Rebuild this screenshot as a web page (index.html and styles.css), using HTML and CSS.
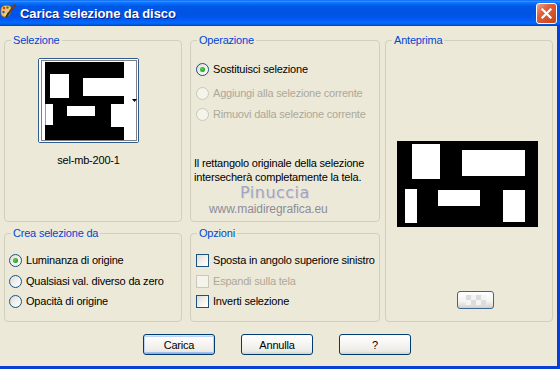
FILE: index.html
```html
<!DOCTYPE html>
<html lang="it">
<head>
    <meta charset="UTF-8">
    <title>Carica selezione da disco</title>
    <link rel="stylesheet" href="styles.css">
</head>
<body>

    <div class="window">
        <div class="titlebar">
            <svg class="app-icon" width="16" height="16" viewBox="0 0 16 16">
                <path d="M1 5 C1 1, 9 0, 11 3 C12 5, 9 6, 10 8 C11 10, 8 14, 4 13 C0 12, 1 8, 1 5 Z" fill="#F2C46A" stroke="#9A5A1A" stroke-width="0.8"/>
                <circle cx="4" cy="4" r="1.3" fill="#E0321C"/>
                <circle cx="7.5" cy="3.5" r="1.2" fill="#2E8A2E"/>
                <circle cx="3.5" cy="8" r="1.2" fill="#2058D0"/>
                <circle cx="6" cy="11" r="1.1" fill="#F0F060"/>
                <path d="M15 1 L8 10" stroke="#7A3A10" stroke-width="2" stroke-linecap="round"/>
                <path d="M8.5 9.5 L6.5 12.5" stroke="#333" stroke-width="2.2" stroke-linecap="round"/>
            </svg>
            <span class="title">Carica selezione da disco</span>
            <button class="close">
                <svg width="13" height="13" viewBox="0 0 13 13">
                    <path d="M2.5 2.5 L10.5 10.5 M10.5 2.5 L2.5 10.5" stroke="#fff" stroke-width="2.2" stroke-linecap="square"/>
                </svg>
            </button>
        </div>

        <div class="client">
            <div class="groups">

                <div class="group sel">
                    <div class="group-title">Selezione</div>
                    <div class="sel-body">
                        <div class="combo">
                            <svg width="99" height="83" viewBox="0 0 99 83">
                                <rect x="0" y="0" width="99" height="83" fill="#fff"/>
                                <rect x="6" y="3" width="79" height="78" fill="#000"/>
                                <rect x="11" y="15" width="19" height="24" fill="#fff"/>
                                <rect x="44" y="19" width="41" height="18" fill="#fff"/>
                                <rect x="6" y="45" width="8" height="21" fill="#9a9a9a"/>
                                <rect x="7" y="45" width="7" height="21" fill="#fff"/>
                                <rect x="28" y="47" width="28" height="10" fill="#fff"/>
                                <rect x="72" y="45" width="13" height="23" fill="#fff"/>
                                <path d="M93 40 L98 40 L95.5 43 Z" fill="#000"/>
                                <rect x="2.5" y="1.5" width="95" height="80" fill="none" stroke="#000" stroke-dasharray="1 1"/>
                            </svg>
                        </div>
                        <div class="sel-name">sel-mb-200-1</div>
                    </div>
                </div>

                <div class="group op">
                    <div class="group-title">Operazione</div>
                    <label class="option first"><span class="radio checked"></span>Sostituisci selezione</label>
                    <label class="option disabled second"><span class="radio"></span>Aggiungi alla selezione corrente</label>
                    <label class="option disabled third"><span class="radio"></span>Rimuovi dalla selezione corrente</label>
                    <p class="note">Il rettangolo originale della selezione<br>intersecherà completamente la tela.</p>
                    <div class="mark-name">Pinuccia</div>
                    <div class="mark-site">www.maidiregrafica.eu</div>
                </div>

                <div class="group preview">
                    <div class="group-title">Anteprima</div>
                    <svg class="preview-img" width="141" height="86" viewBox="0 0 141 86">
                        <rect width="141" height="86" fill="#000"/>
                        <rect x="15" y="3" width="28" height="35" fill="#fff"/>
                        <rect x="65" y="9" width="63" height="26" fill="#fff"/>
                        <rect x="8" y="48" width="12" height="34" fill="#fff"/>
                        <rect x="41" y="49" width="42" height="16" fill="#fff"/>
                        <rect x="106" y="49" width="22" height="32" fill="#fff"/>
                    </svg>
                    <button class="small-btn">
                        <svg width="20" height="10" viewBox="0 0 20 10">
                            <rect width="20" height="10" fill="#f4f4f4"/>
                            <rect x="0" y="0" width="5" height="5" fill="#dcdcdc"/>
                            <rect x="10" y="0" width="5" height="5" fill="#dcdcdc"/>
                            <rect x="5" y="5" width="5" height="5" fill="#dcdcdc"/>
                            <rect x="15" y="5" width="5" height="5" fill="#dcdcdc"/>
                        </svg>
                    </button>
                </div>

                <div class="group source">
                    <div class="group-title">Crea selezione da</div>
                    <label class="option row1"><span class="radio checked"></span>Luminanza di origine</label>
                    <label class="option row2"><span class="radio"></span>Qualsiasi val. diverso da zero</label>
                    <label class="option row3"><span class="radio"></span>Opacità di origine</label>
                </div>

                <div class="group options">
                    <div class="group-title">Opzioni</div>
                    <label class="option row1"><span class="check"></span>Sposta in angolo superiore sinistro</label>
                    <label class="option disabled row2"><span class="check"></span>Espandi sulla tela</label>
                    <label class="option row3"><span class="check"></span>Inverti selezione</label>
                </div>

            </div>

            <div class="buttons">
                <button class="btn default">Carica</button>
                <button class="btn">Annulla</button>
                <button class="btn">?</button>
            </div>
        </div>
    </div>

</body>
</html>
```

FILE: styles.css
```css
* {
    box-sizing: border-box;
}
body {
    margin: 0;
    font-family: "Liberation Sans", Arial, sans-serif;
    font-size: 11px;
    letter-spacing: -0.2px;
    color: #000;
    background-color: #ECE9D8;
}
.window {
    width: 560px;
    height: 369px;
    display: flex;
    flex-direction: column;
}
/* Barra del titolo stile XP */
.titlebar {
    height: 26px;
    display: flex;
    align-items: center;
    color: #fff;
    background: linear-gradient(to bottom, #0058EE 0%, #3593FF 4%, #288EFF 6%, #127DFF 8%, #036FFC 14%, #0262EE 20%, #0057E5 24%, #0054E3 56%, #0055EB 66%, #005BF5 76%, #026AFE 86%, #0062EF 92%, #0052D6 96%, #0040AB 100%);
}
.app-icon {
    margin-left: 0;
    margin-top: -2px;
}
.title {
    flex: 1;
    margin-left: 4px;
    font-size: 13px;
    font-weight: bold;
    letter-spacing: -0.1px;
    text-shadow: 1px 1px 0 #0A1E8C;
}
.close {
    width: 21px;
    height: 21px;
    margin-right: 3px;
    padding: 0;
    display: flex;
    align-items: center;
    justify-content: center;
    border: 1px solid #fff;
    border-radius: 3px;
    background: linear-gradient(135deg, #F0A68C 0%, #E0603C 35%, #C7431A 100%);
}
.client {
    flex: 1;
    border-right: 3px solid #0A3FD6;
    border-bottom: 3px solid #0A3FD6;
}
.groups {
    display: grid;
    grid-template-columns: 178px 198px 173px;
    grid-template-rows: 182px 89px;
    row-gap: 11px;
    margin: 14px 0 0 4px;
}
.group {
    border: 1px solid #D0D0BF;
    border-radius: 4px;
}
.group-title {
    width: max-content;
    margin: -7px 0 0 6px;
    padding: 0 2px;
    line-height: 13px;
    color: #0046D5;
    background-color: #ECE9D8;
}
.op, .options {
    margin-left: 8px;
}
.preview {
    grid-column: 3;
    grid-row: 1 / span 2;
    margin-left: 5px;
}
/* Selezione */
.sel-body {
    width: 101px;
    margin: 11px 0 0 33px;
    text-align: center;
}
.combo {
    width: 101px;
    height: 85px;
    border: 1px solid #2F5C91;
    border-radius: 2px;
}
.combo svg {
    display: block;
}
.sel-name {
    margin-top: 11px;
    line-height: 13px;
}
/* Opzioni e pulsanti radio */
.option {
    display: flex;
    align-items: center;
    gap: 4px;
    height: 16px;
    margin-left: 5px;
}
.option.disabled {
    color: #ACA899;
}
.op .first { margin-top: 14px; }
.op .second { margin-top: 8px; }
.op .third { margin-top: 5px; }
.row1 { margin-top: 12px; }
.row2 { margin-top: 5px; }
.row3 { margin-top: 4px; }
.source .option {
    margin-left: 4px;
}
.radio {
    width: 13px;
    height: 13px;
    border: 1px solid #1C5180;
    border-radius: 50%;
    background: linear-gradient(135deg, #DCDCD7 0%, #F4F4F0 60%, #fff 100%);
    display: flex;
    align-items: center;
    justify-content: center;
}
.radio.checked::after {
    content: "";
    width: 5px;
    height: 5px;
    border-radius: 50%;
    background: radial-gradient(circle at 40% 40%, #55D655 0%, #21A121 70%, #1A7F1A 100%);
}
.disabled .radio, .disabled .check {
    border-color: #CAC8BB;
    background: #F5F4EA;
}
.check {
    width: 13px;
    height: 13px;
    border: 1px solid #1C5180;
    background: linear-gradient(135deg, #DCDCD7 0%, #F4F4F0 60%, #fff 100%);
}
.note {
    margin: 34px 0 0 3px;
    line-height: 14px;
}
.mark-name {
    margin-left: 49px;
    font-family: "DejaVu Sans", sans-serif;
    font-size: 16px;
    letter-spacing: 0.5px;
    line-height: 18px;
    color: #A4A4BC;
    text-shadow: 1px 1px 0 #D8D8E2;
}
.mark-site {
    margin: 1px 0 0 18px;
    font-size: 12px;
    letter-spacing: -0.1px;
    line-height: 13px;
    color: #8C8C9C;
}
/* Anteprima */
.preview-img {
    display: block;
    margin: 94px 0 0 11px;
}
.small-btn {
    display: flex;
    align-items: center;
    justify-content: center;
    width: 37px;
    height: 18px;
    margin: 64px 0 0 71px;
    padding: 0;
    border: 1px solid #3C6496;
    border-radius: 3px;
    background: linear-gradient(to bottom, #fff 0%, #F3F3EF 60%, #D6D0C5 100%);
}
/* Pulsanti in basso */
.buttons {
    display: flex;
    gap: 26px;
    margin-top: 12px;
    padding-left: 143px;
}
.btn {
    width: 72px;
    height: 21px;
    padding: 0;
    font-family: "Liberation Sans", Arial, sans-serif;
    font-size: 11px;
    letter-spacing: -0.2px;
    color: #000;
    border: 1px solid #003C74;
    border-radius: 3px;
    background: linear-gradient(to bottom, #fff 0%, #F5F4F0 50%, #ECEBE6 85%, #D6D0C5 100%);
}
.btn.default {
    box-shadow: inset 0 1px 0 #CEE7FF, inset 1px 0 0 #BCD4F6, inset -1px 0 0 #BCD4F6, inset 0 -1px 0 #89ADE4, inset 0 2px 0 #BCD4F6, inset 0 -2px 0 #A4C1EE;
}
```
